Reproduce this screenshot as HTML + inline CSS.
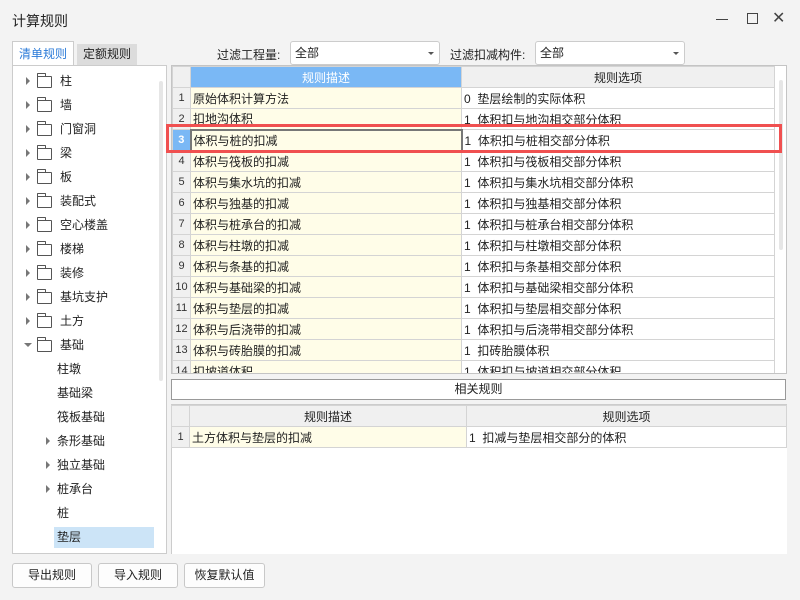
<!DOCTYPE html>
<html><head><meta charset="utf-8"><style>
*{box-sizing:border-box;margin:0;padding:0}
body{width:800px;height:600px;background:#f3f3f3;font-family:"Liberation Sans","Noto Sans CJK SC",sans-serif;font-size:12px;color:#222;position:relative;overflow:hidden}
.a{position:absolute}
.tree div.it{position:absolute;height:24px;line-height:24px;font-size:12px}
.tri{position:absolute;width:0;height:0;border-left:4px solid #777;border-top:4px solid transparent;border-bottom:4px solid transparent}
.fold{position:absolute;width:15px;height:12px;border:1.3px solid #555;border-radius:1px}
.fold:before{content:"";position:absolute;left:-1px;top:-4px;width:7px;height:3px;border:1.3px solid #555;border-bottom:none;border-radius:1px 1px 0 0}
table{border-collapse:collapse;table-layout:fixed;position:absolute}
td{border:1px solid #d4d4d4;height:21px;font-size:12px;white-space:nowrap;overflow:hidden;padding:0 2px}
td.n{background:#f0f0f0;text-align:center;font-size:11px;color:#333}
td.d{background:#fffde8}
td.o{background:#fff}
.btn{position:absolute;top:563px;height:25px;border:1px solid #c8c8c8;border-radius:3px;background:#fdfdfd;text-align:center;line-height:23px;font-size:12px}
.sel{position:absolute;height:24px;border:1px solid #ccc;border-radius:3px;background:#fff;line-height:22px;padding-left:4px}
.sel:after{content:"";position:absolute;right:5px;top:10px;border-top:3px solid #555;border-left:3px solid transparent;border-right:3px solid transparent}
</style></head><body>
<div class="a" style="left:0;top:0;width:800px;height:40px;background:#f3f3f3"></div>
<div class="a" style="left:12px;top:11px;font-size:14px">计算规则</div>
<div class="a" style="left:716px;top:19px;width:12px;height:1px;background:#444"></div>
<div class="a" style="left:747px;top:13px;width:11px;height:11px;border:1px solid #444"></div>
<div class="a" style="left:772px;top:8px;font-size:16px;color:#444">✕</div>

<div class="a" style="left:12px;top:41px;width:62px;height:24px;background:#fff;border:1px solid #ccc;border-bottom:none;color:#2a7ad8;text-align:center;line-height:24px">清单规则</div>
<div class="a" style="left:77px;top:44px;width:60px;height:21px;background:#dcdcdc;text-align:center;line-height:21px">定额规则</div>
<div class="a" style="left:217px;top:46px">过滤工程量:</div>
<div class="sel" style="left:290px;top:41px;width:150px">全部</div>
<div class="a" style="left:450px;top:46px">过滤扣减构件:</div>
<div class="sel" style="left:535px;top:41px;width:150px">全部</div>

<div class="a tree" style="left:12px;top:65px;width:155px;height:489px;background:#fff;border:1px solid #ccc">
<div class="a" style="left:146px;top:15px;width:4px;height:300px;background:#e6e6e6;border-radius:2px"></div>
</div>
<div class="tree">
<div class="tri" style="left:26px;top:77px"></div><div class="fold" style="left:37px;top:76px"></div><div class="it" style="left:60px;top:69px">柱</div>
<div class="tri" style="left:26px;top:101px"></div><div class="fold" style="left:37px;top:100px"></div><div class="it" style="left:60px;top:93px">墙</div>
<div class="tri" style="left:26px;top:125px"></div><div class="fold" style="left:37px;top:124px"></div><div class="it" style="left:60px;top:117px">门窗洞</div>
<div class="tri" style="left:26px;top:149px"></div><div class="fold" style="left:37px;top:148px"></div><div class="it" style="left:60px;top:141px">梁</div>
<div class="tri" style="left:26px;top:173px"></div><div class="fold" style="left:37px;top:172px"></div><div class="it" style="left:60px;top:165px">板</div>
<div class="tri" style="left:26px;top:197px"></div><div class="fold" style="left:37px;top:196px"></div><div class="it" style="left:60px;top:189px">装配式</div>
<div class="tri" style="left:26px;top:221px"></div><div class="fold" style="left:37px;top:220px"></div><div class="it" style="left:60px;top:213px">空心楼盖</div>
<div class="tri" style="left:26px;top:245px"></div><div class="fold" style="left:37px;top:244px"></div><div class="it" style="left:60px;top:237px">楼梯</div>
<div class="tri" style="left:26px;top:269px"></div><div class="fold" style="left:37px;top:268px"></div><div class="it" style="left:60px;top:261px">装修</div>
<div class="tri" style="left:26px;top:293px"></div><div class="fold" style="left:37px;top:292px"></div><div class="it" style="left:60px;top:285px">基坑支护</div>
<div class="tri" style="left:26px;top:317px"></div><div class="fold" style="left:37px;top:316px"></div><div class="it" style="left:60px;top:309px">土方</div>
<div class="a" style="left:24px;top:343px;border-top:4px solid #777;border-left:4px solid transparent;border-right:4px solid transparent"></div><div class="fold" style="left:37px;top:340px"></div><div class="it" style="left:60px;top:333px">基础</div>
<div class="it" style="left:57px;top:357px">柱墩</div>
<div class="it" style="left:57px;top:381px">基础梁</div>
<div class="it" style="left:57px;top:405px">筏板基础</div>
<div class="tri" style="left:46px;top:437px"></div><div class="it" style="left:57px;top:429px">条形基础</div>
<div class="tri" style="left:46px;top:461px"></div><div class="it" style="left:57px;top:453px">独立基础</div>
<div class="tri" style="left:46px;top:485px"></div><div class="it" style="left:57px;top:477px">桩承台</div>
<div class="it" style="left:57px;top:501px">桩</div>
<div class="a" style="left:54px;top:527px;width:100px;height:21px;background:#cce4f7"></div>
<div class="it" style="left:57px;top:525px">垫层</div>
</div>

<div class="a" style="left:171px;top:65px;width:616px;height:309px;background:#fff;border:1px solid #c4c4c4;overflow:hidden">
<table style="left:0;top:0;width:602px">
<colgroup><col style="width:18px"><col style="width:271px"><col style="width:313px"></colgroup>
<tr><td class="n"></td><td style="background:#7ab8f5;color:#fff;text-align:center">规则描述</td><td style="background:#f0f0f0;text-align:center">规则选项</td></tr>
<tr><td class="n">1</td><td class="d">原始体积计算方法</td><td class="o">0&nbsp; 垫层绘制的实际体积</td></tr>
<tr><td class="n">2</td><td class="d">扣地沟体积</td><td class="o">1&nbsp; 体积扣与地沟相交部分体积</td></tr>
<tr><td class="n" style="background:#7ab8f5;color:#fff;font-weight:bold">3</td><td class="d" style="border:2px solid #777">体积与桩的扣减</td><td class="o">1&nbsp; 体积扣与桩相交部分体积</td></tr>
<tr><td class="n">4</td><td class="d">体积与筏板的扣减</td><td class="o">1&nbsp; 体积扣与筏板相交部分体积</td></tr>
<tr><td class="n">5</td><td class="d">体积与集水坑的扣减</td><td class="o">1&nbsp; 体积扣与集水坑相交部分体积</td></tr>
<tr><td class="n">6</td><td class="d">体积与独基的扣减</td><td class="o">1&nbsp; 体积扣与独基相交部分体积</td></tr>
<tr><td class="n">7</td><td class="d">体积与桩承台的扣减</td><td class="o">1&nbsp; 体积扣与桩承台相交部分体积</td></tr>
<tr><td class="n">8</td><td class="d">体积与柱墩的扣减</td><td class="o">1&nbsp; 体积扣与柱墩相交部分体积</td></tr>
<tr><td class="n">9</td><td class="d">体积与条基的扣减</td><td class="o">1&nbsp; 体积扣与条基相交部分体积</td></tr>
<tr><td class="n">10</td><td class="d">体积与基础梁的扣减</td><td class="o">1&nbsp; 体积扣与基础梁相交部分体积</td></tr>
<tr><td class="n">11</td><td class="d">体积与垫层的扣减</td><td class="o">1&nbsp; 体积扣与垫层相交部分体积</td></tr>
<tr><td class="n">12</td><td class="d">体积与后浇带的扣减</td><td class="o">1&nbsp; 体积扣与后浇带相交部分体积</td></tr>
<tr><td class="n">13</td><td class="d">体积与砖胎膜的扣减</td><td class="o">1&nbsp; 扣砖胎膜体积</td></tr>
<tr><td class="n">14</td><td class="d">扣坡道体积</td><td class="o">1&nbsp; 体积扣与坡道相交部分体积</td></tr>
</table>
<div class="a" style="left:607px;top:14px;width:4px;height:170px;background:#e6e6e6;border-radius:2px"></div>
</div>
<div class="a" style="left:166px;top:124px;width:616px;height:29px;border:3px solid #f05050"></div>

<div class="a" style="left:171px;top:379px;width:615px;height:21px;background:#fff;border:1px solid #999;text-align:center;line-height:19px">相关规则</div>

<div class="a" style="left:171px;top:404px;width:616px;height:150px;background:#fff;border-left:1px solid #ccc;border-top:1px solid #ccc"></div>
<table style="left:171px;top:405px;width:615px">
<colgroup><col style="width:18px"><col style="width:277px"><col style="width:320px"></colgroup>
<tr><td class="n"></td><td style="background:#f0f0f0;text-align:center">规则描述</td><td style="background:#f0f0f0;text-align:center">规则选项</td></tr>
<tr><td class="n">1</td><td class="d">土方体积与垫层的扣减</td><td class="o">1&nbsp; 扣减与垫层相交部分的体积</td></tr>
</table>

<div class="btn" style="left:12px;width:80px">导出规则</div>
<div class="btn" style="left:98px;width:80px">导入规则</div>
<div class="btn" style="left:184px;width:81px">恢复默认值</div>
</body></html>
